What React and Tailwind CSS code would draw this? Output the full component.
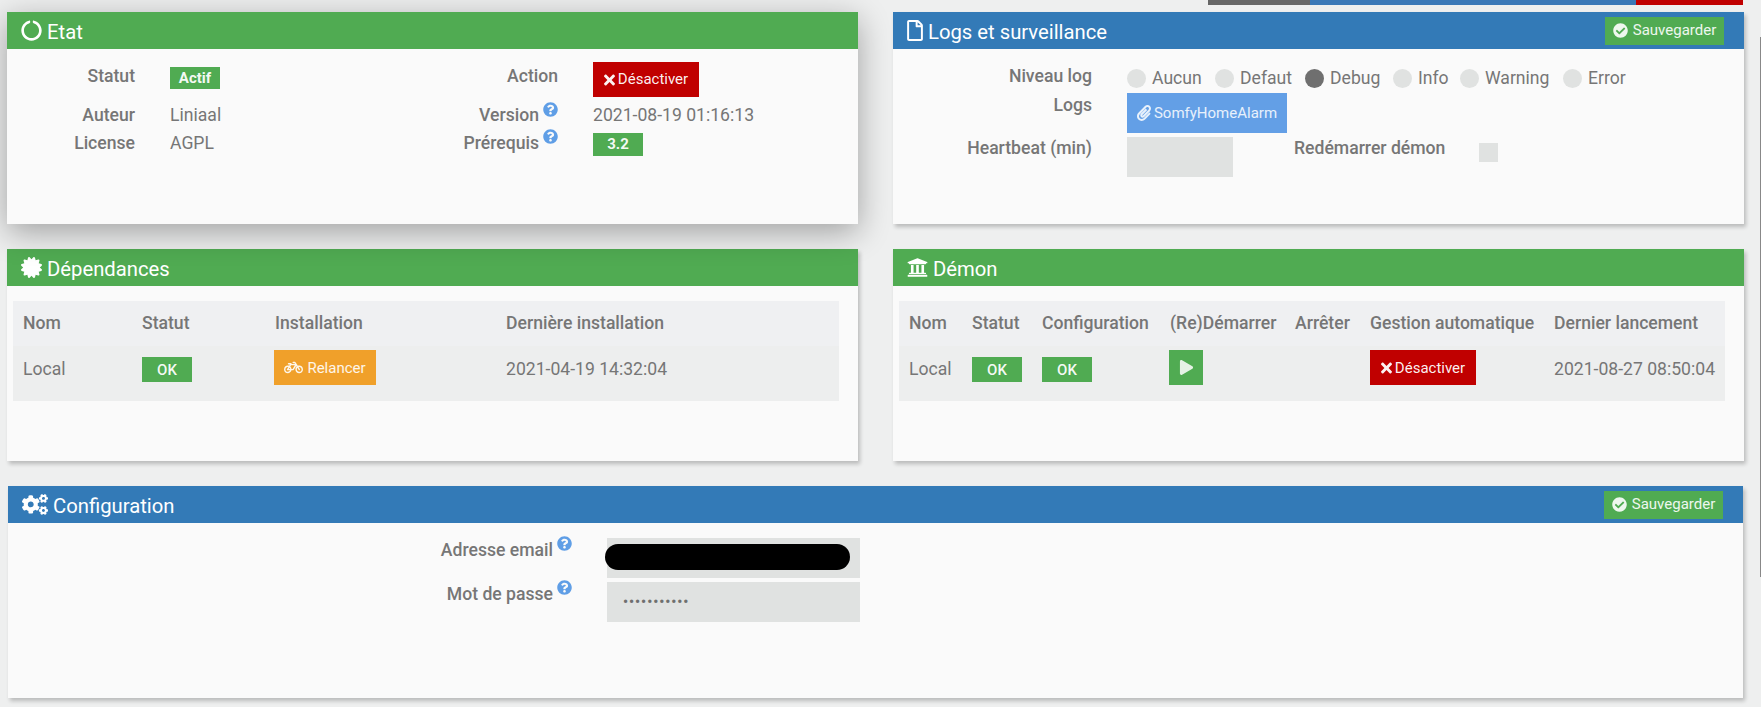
import React from "react";
import { FaCircleNotch, FaRegFile, FaCertificate, FaUniversity, FaCogs, FaCheckCircle, FaTimes, FaPaperclip, FaBicycle, FaPlay, FaQuestionCircle } from "react-icons/fa";

const Help = ({ className = "" }) => (
  <FaQuestionCircle className={"text-[#5f9ee6] text-[15px] shrink-0 ml-[4px] " + className} />
);

const Panel = ({ color, icon, title, right, className = "", children }) => (
  <section className={"bg-[#fafafa] h-[212px] " + className}>
    <header className={"h-[37px] flex items-center justify-between pl-[14px] text-white " + color}>
      <div className="flex items-center gap-[5px] text-[20.25px]">
        <span className="text-[21px]">{icon}</span>
        <span className="pt-[4px]">{title}</span>
      </div>
      {right}
    </header>
    {children}
  </section>
);

const Save = () => (
  <button className="mr-[20px] h-[28px] w-[119px] bg-[#50ab52] text-white/90 text-[15px] flex items-center justify-center gap-[5px]">
    <FaCheckCircle className="text-[15px]" /> Sauvegarder
  </button>
);

const Badge = ({ children, className = "" }) => (
  <span className={"w-[50px] bg-[#50ab52] text-white/95 text-[15px] flex items-center justify-center " + className}>{children}</span>
);

const Off = ({ className = "" }) => (
  <button className={"w-[106px] h-[35px] bg-[#c00000] text-white/95 text-[15px] flex items-center justify-center gap-[3px] " + className}>
    <FaTimes className="w-[11px] h-[16px]" /> Désactiver
  </button>
);

const Label = ({ className = "", children }) => (
  <div className={"leading-[28px] font-medium text-right " + className}>{children}</div>
);

const Radio = ({ label, on, className }) => (
  <div className={"flex items-center gap-[6px] " + className}>
    <span className={"w-[19px] h-[19px] rounded-full " + (on ? "bg-[#6f6f6f]" : "bg-[#e0e2e1]")} />
    <span className="leading-[19px] whitespace-nowrap">{label}</span>
  </div>
);

export default function App() {
  return (
    <div className="relative h-[707px] overflow-hidden bg-[#eeefef] font-[Roboto,sans-serif] text-[17.6px] text-[#767676]">
      <div className="h-[5px] flex justify-end pr-[18px]">
        <div className="w-[102px] bg-[#666666]" />
        <div className="w-[326px] bg-[#3a78b7]" />
        <div className="w-[107px] bg-[#c00000]" />
      </div>

      <div className="pl-[7px] pr-[17px] pt-[7px] grid grid-cols-[851px_851px] gap-x-[35px] gap-y-[25px]">
        <Panel color="bg-[#50ab52]" icon={<FaCircleNotch />} title="Etat" className="shadow-[0_8px_30px_rgba(0,0,0,0.33)] relative">
          <div className="pt-[13px] flex">
            <div className="w-[400px]">
              <div className="flex h-[39px]">
                <Label className="w-[128px]">Statut</Label>
                <Badge className="ml-[35px] mt-[5px] h-[22px] font-bold">Actif</Badge>
              </div>
              <div className="flex h-[28px] leading-[28px]">
                <Label className="w-[128px]">Auteur</Label>
                <span className="ml-[35px]">Liniaal</span>
              </div>
              <div className="flex h-[28px] leading-[28px]">
                <Label className="w-[128px]">License</Label>
                <span className="ml-[35px]">AGPL</span>
              </div>
            </div>
            <div>
              <div className="flex h-[39px]">
                <Label className="w-[151px]">Action</Label>
                <Off className="ml-[35px]" />
              </div>
              <div className="flex h-[28px] leading-[28px]">
                <Label className="w-[151px] flex justify-end">Version<Help className="mt-[1px]" /></Label>
                <span className="ml-[35px]">2021-08-19 01:16:13</span>
              </div>
              <div className="flex h-[28px]">
                <Label className="w-[151px] flex justify-end">Prérequis<Help /></Label>
                <Badge className="ml-[35px] mt-[4px] h-[23px] font-bold">3.2</Badge>
              </div>
            </div>
          </div>
        </Panel>

        <Panel color="bg-[#337ab7]" icon={<FaRegFile className="w-[16px] h-[21px]" />} title="Logs et surveillance" right={<Save />} className="shadow-[2px_3px_4px_rgba(0,0,0,0.22)]">
          <div className="pt-[13px]">
            <div className="flex h-[29px]">
              <Label className="w-[199px]">Niveau log</Label>
              <div className="ml-[35px] mt-[7px] w-[499px] flex h-[19px] overflow-hidden">
                <Radio label="Aucun" className="w-[88px]" />
                <Radio label="Defaut" className="w-[90px]" />
                <Radio label="Debug" on className="w-[88px]" />
                <Radio label="Info" className="w-[67px]" />
                <Radio label="Warning" className="w-[103px]" />
                <Radio label="Error" />
              </div>
            </div>
            <div className="flex h-[43px]">
              <Label className="w-[199px]">Logs</Label>
              <button className="ml-[35px] mt-[2px] w-[160px] h-[40px] bg-[#639fe6] text-white/85 text-[15px] flex items-center justify-center gap-[3px]">
                <FaPaperclip className="w-[14px] h-[16px]" /> SomfyHomeAlarm
              </button>
            </div>
            <div className="flex h-[43px]">
              <Label className="w-[199px]">Heartbeat (min)</Label>
              <div className="ml-[35px] mt-[3px] w-[106px] h-[40px] bg-[#e0e2e1]" />
              <Label className="ml-[61px] w-[150px] whitespace-nowrap">Redémarrer démon</Label>
              <div className="ml-[35px] mt-[9px] w-[19px] h-[19px] bg-[#e0e2e1]" />
            </div>
          </div>
        </Panel>

        <Panel color="bg-[#50ab52]" icon={<FaCertificate />} title="Dépendances" className="shadow-[2px_3px_4px_rgba(0,0,0,0.22)]">
          <div className="pl-[6px] pt-[15px]">
            <table className="table-fixed border-collapse w-[826px]">
              <thead>
                <tr className="h-[45px] bg-[#eff0f2] text-left">
                  <th className="w-[129px] pl-[10px] font-medium">Nom</th>
                  <th className="w-[132px] font-medium">Statut</th>
                  <th className="w-[232px] pl-[1px] font-medium">Installation</th>
                  <th className="font-medium">Dernière installation</th>
                </tr>
              </thead>
              <tbody>
                <tr className="h-[55px] bg-[#edeeee] align-top leading-[28px]">
                  <td className="pl-[10px] pt-[9px]">Local</td>
                  <td className="pt-[11px]"><Badge className="h-[25px] font-medium">OK</Badge></td>
                  <td className="pt-[4px]">
                    <button className="w-[102px] h-[35px] bg-[#f0a02a] text-white/90 text-[15px] flex items-center justify-center gap-[4px]">
                      <FaBicycle className="text-[19px]" /> Relancer
                    </button>
                  </td>
                  <td className="pt-[9px]">2021-04-19 14:32:04</td>
                </tr>
              </tbody>
            </table>
          </div>
        </Panel>

        <Panel color="bg-[#50ab52]" icon={<FaUniversity />} title="Démon" className="shadow-[2px_3px_4px_rgba(0,0,0,0.22)]">
          <div className="pl-[6px] pt-[15px]">
            <table className="table-fixed border-collapse w-[826px]">
              <thead>
                <tr className="h-[45px] bg-[#eff0f2] text-left whitespace-nowrap">
                  <th className="w-[73px] pl-[10px] font-medium">Nom</th>
                  <th className="w-[70px] font-medium">Statut</th>
                  <th className="w-[127px] font-medium">Configuration</th>
                  <th className="w-[126px] pl-[1px] font-medium">(Re)Démarrer</th>
                  <th className="w-[75px] font-medium">Arrêter</th>
                  <th className="w-[184px] font-medium">Gestion automatique</th>
                  <th className="font-medium">Dernier lancement</th>
                </tr>
              </thead>
              <tbody>
                <tr className="h-[55px] bg-[#edeeee] align-top leading-[28px]">
                  <td className="pl-[10px] pt-[9px]">Local</td>
                  <td className="pt-[11px]"><Badge className="h-[25px] font-medium">OK</Badge></td>
                  <td className="pt-[11px]"><Badge className="h-[25px] font-medium">OK</Badge></td>
                  <td className="pt-[4px]">
                    <button className="w-[34px] h-[35px] bg-[#50ab52] text-white/85 flex items-center justify-center">
                      <FaPlay className="text-[15px]" />
                    </button>
                  </td>
                  <td />
                  <td className="pt-[4px]"><Off /></td>
                  <td className="pt-[9px] whitespace-nowrap">2021-08-27 08:50:04</td>
                </tr>
              </tbody>
            </table>
          </div>
        </Panel>

        <Panel color="bg-[#337ab7]" icon={<FaCogs className="w-[26px] h-[21px]" />} title="Configuration" right={<Save />} className="col-span-2 w-[1735px] ml-px shadow-[2px_3px_4px_rgba(0,0,0,0.22)]">
          <div className="pt-[13px]">
            <div className="flex h-[44px]">
              <Label className="w-[564px] flex justify-end">Adresse email<Help /></Label>
              <div className="relative ml-[35px] mt-[2px] w-[253px] h-[40px] bg-[#e0e2e1]">
                <div className="absolute left-[-2px] top-[6px] w-[245px] h-[26px] rounded-full bg-black" />
              </div>
            </div>
            <div className="flex h-[44px]">
              <Label className="w-[564px] flex justify-end">Mot de passe<Help /></Label>
              <div className="ml-[35px] mt-[2px] w-[253px] h-[40px] bg-[#e0e2e1] pl-[16px] flex items-center font-bold text-[14px] tracking-[1px] text-[#6f6f6f]">•••••••••••</div>
            </div>
          </div>
        </Panel>
      </div>

      <div className="absolute right-0 top-[37px] w-px h-[540px] bg-[#888888]" />
    </div>
  );
}
